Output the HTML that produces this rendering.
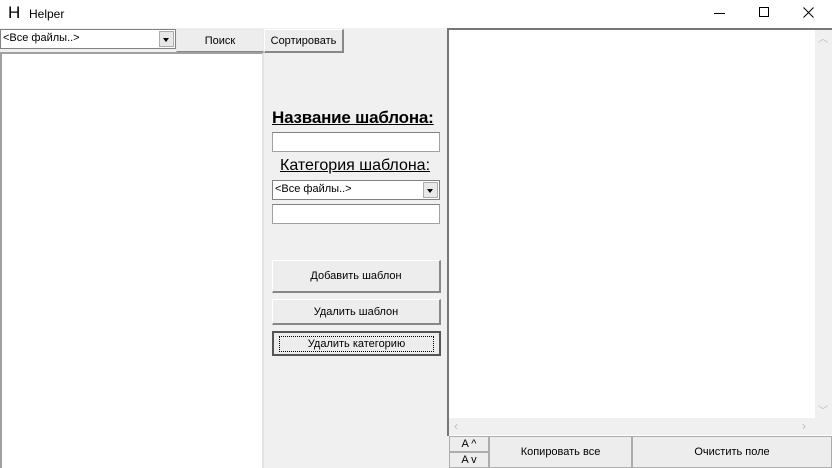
<!DOCTYPE html>
<html><head><meta charset="utf-8"><style>
*{box-sizing:border-box;margin:0;padding:0}
body{width:832px;height:468px;background:#f0f0f0;position:relative;overflow:hidden;font-family:"Liberation Sans",sans-serif;font-size:11px;color:#000}
.a{position:absolute}
.btn{position:absolute;background:#ededed;border:1px solid #adadad;display:flex;align-items:center;justify-content:center;font-size:11px}
.in{position:absolute;background:#fff;border:1px solid #a0a0a0;border-top-color:#828282}
.combo{position:absolute;background:#fff;border:1px solid #828282;font-size:11px;line-height:16px;padding-left:2px}
.arr{position:absolute;right:1px;top:1px;width:15px;bottom:1px;background:#e8e8e8;border:1px solid #adadad}
.arr:after{content:"";position:absolute;left:3px;top:6px;border:3.5px solid transparent;border-top:4px solid #000}
</style></head><body>
<div class="a" style="left:0;top:0;width:832px;height:28px;background:#fff"></div>
<div class="a" style="left:8px;top:3px;font-size:17px">H</div>
<div class="a" style="left:29px;top:7px;font-size:12px">Helper</div>
<div class="a" style="left:714px;top:13px;width:11px;height:1px;background:#000"></div>
<div class="a" style="left:759px;top:7px;width:10px;height:10px;border:1px solid #000"></div>
<svg class="a" style="left:803px;top:7px" width="11" height="11"><path d="M0.5 0.5L10.5 10.5M10.5 0.5L0.5 10.5" stroke="#000" stroke-width="1"/></svg>

<div class="combo" style="left:0;top:29px;width:176px;height:20px">&lt;Все файлы..&gt;<div class="arr"></div></div>
<div class="btn" style="left:176px;top:29px;width:88px;height:23px;border-color:#e8e8e8;border-bottom-color:#888">Поиск</div>
<div class="btn" style="left:264px;top:29px;width:80px;height:24px;border-right:2px solid #888;border-bottom:2px solid #888;border-left-color:#fff;border-top-color:#fff">Сортировать</div>
<div class="in" style="left:0;top:52px;width:264px;height:416px;border:2px solid #a0a0a0;border-right-color:#e3e3e3;border-bottom:none"></div>

<div class="a" style="left:272px;top:108px;font-size:17px;font-weight:bold;text-decoration:underline;letter-spacing:-0.2px">Название шаблона:</div>
<div class="in" style="left:272px;top:132px;width:168px;height:20px"></div>
<div class="a" style="left:280px;top:157px;font-size:16px;text-decoration:underline">Категория шаблона:</div>
<div class="combo" style="left:272px;top:180px;width:168px;height:20px">&lt;Все файлы..&gt;<div class="arr"></div></div>
<div class="in" style="left:272px;top:204px;width:168px;height:20px"></div>
<div class="btn" style="left:272px;top:260px;width:169px;height:33px;border-right:2px solid #888;border-bottom:2px solid #888;border-left-color:#fff;border-top-color:#fff">Добавить шаблон</div>
<div class="btn" style="left:272px;top:299px;width:169px;height:26px;border-right:2px solid #888;border-bottom:2px solid #888;border-left-color:#fff;border-top-color:#fff">Удалить шаблон</div>
<div class="btn" style="left:272px;top:331px;width:169px;height:25px;border:2px solid #555"><span style="outline:1px dotted #000;padding:1px 28px;display:inline-block">Удалить категорию</span></div>

<div class="a" style="left:447px;top:28px;width:385px;height:408px;background:#fff;border-left:2px solid #777;border-top:2px solid #777"></div>
<div class="a" style="left:815px;top:30px;width:17px;height:388px;background:#f0f0f0"></div>
<div class="a" style="left:449px;top:418px;width:383px;height:17px;background:#f0f0f0"></div>
<div class="a" style="left:818px;top:30px;color:#bbb;font-size:10px">︿</div>
<div class="a" style="left:818px;top:402px;color:#bbb;font-size:10px">﹀</div>
<div class="a" style="left:454px;top:419px;color:#bbb;font-size:12px">‹</div>
<div class="a" style="left:802px;top:419px;color:#bbb;font-size:12px">›</div>

<div class="btn" style="left:449px;top:436px;width:40px;height:16px;font-size:11px">A ^</div>
<div class="btn" style="left:449px;top:452px;width:40px;height:16px;font-size:11px">A v</div>
<div class="btn" style="left:489px;top:436px;width:143px;height:32px">Копировать все</div>
<div class="btn" style="left:632px;top:436px;width:200px;height:32px">Очистить поле</div>
</body></html>
